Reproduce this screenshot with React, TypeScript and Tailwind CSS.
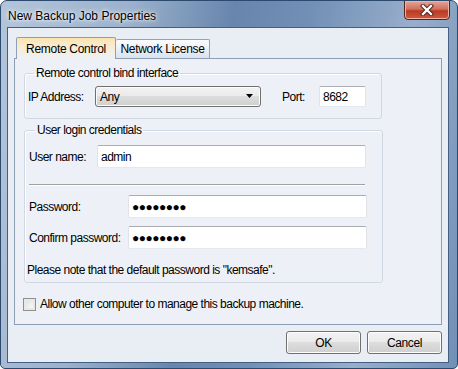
import React from "react";

const font = { fontFamily: '"Liberation Sans", Arial, sans-serif' };

function TextBox({ className, children }: { className: string; children?: React.ReactNode }) {
  return (
    <div
      className={`bg-white border border-[#e2e3ea] border-t-[#abadb3] border-b-[#e3e9ef] rounded-[2px] flex items-center px-[3px] text-[12px] text-black ${className}`}
    >
      {children}
    </div>
  );
}

function Button({ label }: { label: string }) {
  return (
    <button
      type="button"
      className="w-[75px] h-[23px] rounded-[3px] border border-[#707070] bg-[linear-gradient(#f2f2f2_0%,#ebebeb_45%,#dddddd_50%,#cfcfcf_100%)] shadow-[inset_0_0_0_1px_#fcfcfc] text-[12px] tracking-[-0.4px] text-black"
    >
      {label}
    </button>
  );
}

export default function App() {
  return (
    <div
      style={font}
      className="w-[458px] h-[369px] rounded-t-[7px] rounded-b-[5px] border border-[#2c4a6e] bg-[linear-gradient(100deg,#b3c5da_0%,#9bb1cc_25%,#6886ad_45%,#7290b6_60%,#98aecb_80%,#7190b5_100%)] flex flex-col overflow-hidden"
    >
      {/* title bar */}
      <div className="h-[26px] flex justify-between items-start">
        <span className="ml-[7px] mt-[6px] text-[12px] text-black [text-shadow:0_0_6px_#ffffff,0_0_3px_#ffffff]">
          New Backup Job Properties
        </span>
        <div className="mr-[7px] -mt-px w-[46px] h-[20px] rounded-b-[4px] border border-[#5a2121] bg-[linear-gradient(#e5a597_0%,#d0705e_45%,#b93b24_55%,#cf5a3c_100%)] shadow-[inset_0_0_0_1px_#eeb3a5] flex items-center justify-center">
          <svg width="14" height="12" viewBox="0 0 14 12">
            <path d="M3 2 L11 10 M11 2 L3 10" stroke="#4a1a14" strokeWidth="4.2" strokeLinecap="square" />
            <path d="M3 2 L11 10 M11 2 L3 10" stroke="#ffffff" strokeWidth="2.4" strokeLinecap="square" />
          </svg>
        </div>
      </div>

      {/* client area */}
      <div className="ml-[6px] w-[442px] h-[336px] border border-[#435f84] bg-[#e9eef5] flex flex-col px-[6px] pt-[8px] text-[12px] tracking-[-0.5px] text-black whitespace-nowrap">
        {/* tabs */}
        <div className="flex items-end pl-[2px] h-[22px] relative z-10 tracking-[-0.3px]">
          <div className="w-[100px] h-[22px] -mb-px rounded-t-[2px] border border-b-0 border-[#8ea0b8] bg-[linear-gradient(#fbe3ad_0%,#f8eccf_35%,#eef1f5_100%)] flex items-center justify-center">
            Remote Control
          </div>
          <div className="w-[94px] h-[19px] rounded-t-[2px] border border-l-0 border-b-0 border-[#8ea5c2] bg-[linear-gradient(#fbfcfd_0%,#eaf0f7_50%,#d9e3ee_100%)] flex items-center justify-center">
            Network License
          </div>
        </div>

        {/* panel */}
        <div className="w-[428px] h-[267px] border border-[#8e9fb5] bg-[#edf1f7] flex flex-col pl-[9px] pt-[7px]">
          <fieldset className="w-[358px] h-[53px] border border-[#d0d9e3] rounded-[3px] shadow-[inset_1px_1px_0_#ffffff] pl-[3px]">
            <legend className="ml-[6px] px-[2px] leading-[15px]">
              Remote control bind interface
            </legend>
            <div className="flex items-center mt-[5px]">
              <span className="w-[67px]">IP Address:</span>
              <div className="w-[166px] h-[21px] rounded-[3px] border border-[#707070] bg-[linear-gradient(#f2f2f2_0%,#ebebeb_45%,#dddddd_50%,#cfcfcf_100%)] shadow-[inset_0_0_0_1px_#fbfbfb] flex items-center justify-between pl-[4px] pr-[6px]">
                <span>Any</span>
                <svg width="8" height="5" viewBox="0 0 8 5">
                  <path d="M0 0 H7 L3.5 4 Z" fill="#000000" />
                </svg>
              </div>
              <span className="ml-[21px] w-[37px]">Port:</span>
              <TextBox className="w-[47px] h-[21px] items-start pt-px tracking-[-0.5px]">8682</TextBox>
            </div>
          </fieldset>

          <fieldset className="mt-[4px] w-[358px] h-[160px] border border-[#d0d9e3] rounded-[3px] shadow-[inset_1px_1px_0_#ffffff] pl-[4px] pr-[15px]">
            <legend className="ml-[6px] px-[2px] leading-[15px]">
              User login credentials
            </legend>
            <div className="flex items-center mt-[7px]">
              <span className="w-[68px]">User name:</span>
              <TextBox className="w-[269px] h-[23px] items-start pt-[2px] tracking-[-0.5px]">admin</TextBox>
            </div>
            <div className="mt-[16px] mr-[2px] border-t border-[#a0a0a0] border-b border-b-white" />
            <div className="flex items-center mt-[9px]">
              <span className="w-[99px]">Password:</span>
              <TextBox className="w-[239px] h-[23px] text-[9px] tracking-[-0.5px]">●●●●●●●●</TextBox>
            </div>
            <div className="flex items-center mt-[8px]">
              <span className="w-[99px]">Confirm password:</span>
              <TextBox className="w-[239px] h-[23px] text-[9px] tracking-[-0.5px]">●●●●●●●●</TextBox>
            </div>
            <div className="mt-[14px] -ml-[2px] leading-[15px]">
              Please note that the default password is "kemsafe".
            </div>
          </fieldset>

          <label className="mt-[12px] -ml-[1px] flex items-center gap-[4px]">
            <span className="w-[13px] h-[13px] border border-[#8e8f8f] bg-[linear-gradient(135deg,#dcdcdc,#ffffff)] shadow-[inset_0_0_0_2px_#e8e8e8]" />
            Allow other computer to manage this backup machine.
          </label>
        </div>

        {/* footer */}
        <div className="flex justify-end gap-[6px] mt-[6px]">
          <Button label="OK" />
          <Button label="Cancel" />
        </div>
      </div>
    </div>
  );
}
